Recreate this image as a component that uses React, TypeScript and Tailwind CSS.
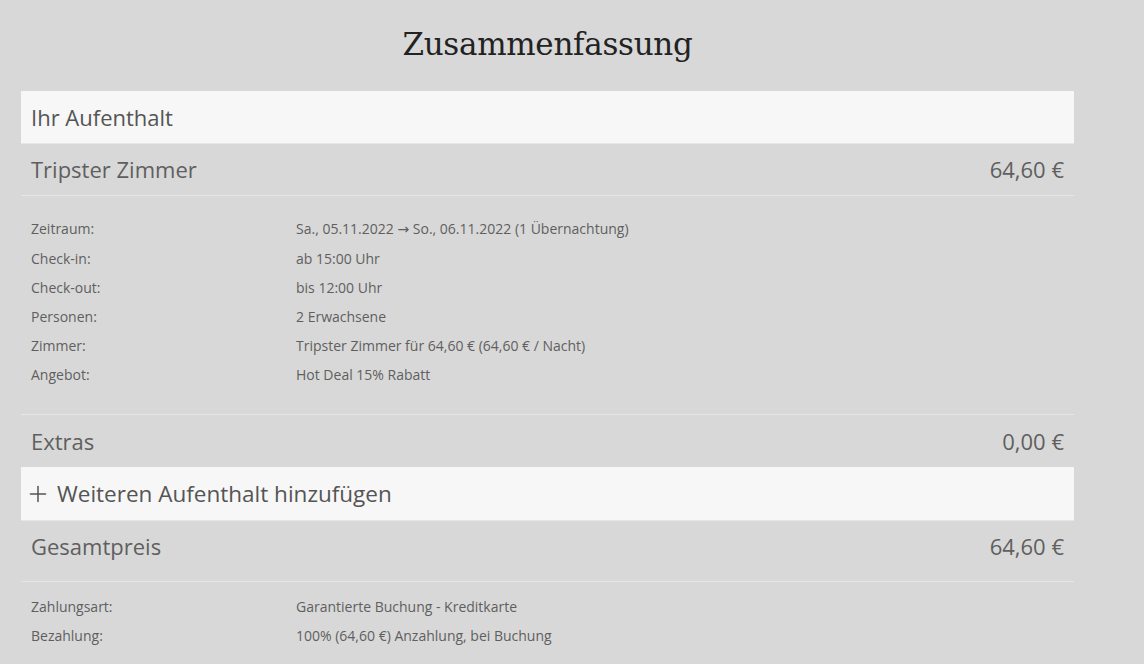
import { Plus } from "lucide-react";

const stay: [string, React.ReactNode][] = [
  [
    "Zeitraum:",
    <>
      Sa., 05.11.2022 <span className="font-['DejaVu_Sans',sans-serif] text-[14px]">{"\u2192"}</span> So., 06.11.2022 (1 Übernachtung)
    </>,
  ],
  ["Check-in:", "ab 15:00 Uhr"],
  ["Check-out:", "bis 12:00 Uhr"],
  ["Personen:", "2 Erwachsene"],
  ["Zimmer:", "Tripster Zimmer für 64,60 € (64,60 € / Nacht)"],
  ["Angebot:", "Hot Deal 15% Rabatt"],
];

const payment: [string, React.ReactNode][] = [
  ["Zahlungsart:", "Garantierte Buchung - Kreditkarte"],
  ["Bezahlung:", "100% (64,60 €) Anzahlung, bei Buchung"],
];

function PriceRow({ label, price, className = "" }: { label: string; price: string; className?: string }) {
  return (
    <div className={`flex items-center justify-between px-[10px] border-b border-[#e6e6e6] text-[22px] text-[#5f5f5f] ${className}`}>
      <span>{label}</span>
      <span>{price}</span>
    </div>
  );
}

function Details({ rows, className = "", rowClass = "" }: { rows: [string, React.ReactNode][]; className?: string; rowClass?: string }) {
  return (
    <div className={`px-[10px] text-[14px] text-[#5f5f5f] ${className}`}>
      {rows.map(([k, v]) => (
        <div key={k} className={`flex h-[29px] items-center ${rowClass}`}>
          <span className="w-[265px] shrink-0">{k}</span>
          <span>{v}</span>
        </div>
      ))}
    </div>
  );
}

export default function App() {
  return (
    <div className="bg-[#d8d8d8] font-['Open_Sans',sans-serif] overflow-hidden h-[664px]">
      <div className="w-[1053px] ml-[21px]">
        <h1 className="h-[91px] pt-[22px] text-center text-[31px] leading-[44px] text-[#222] font-['DejaVu_Serif',serif] tracking-[-0.3px]">
          Zusammenfassung
        </h1>

        <div className="h-[53px] bg-[#f7f7f7] border-b border-[#e6e6e6] flex items-center px-[10px] text-[22px] text-[#555]">
          Ihr Aufenthalt
        </div>
        <PriceRow label="Tripster Zimmer" price="64,60 €" className="h-[52px]" />
        <Details rows={stay} rowClass="first:h-[31px]" className="pt-[17px] pb-[25px] border-b border-[#e6e6e6]" />
        <PriceRow label="Extras" price="0,00 €" className="h-[52px] border-b-0" />

        <div className="h-[54px] bg-[#f7f7f7] border-b border-[#e6e6e6] flex items-center gap-[6px] px-[4px] text-[22.5px] text-[#555]">
          <Plus className="w-[26px] h-[26px] text-[#555]" strokeWidth={1.4} />
          Weiteren Aufenthalt hinzufügen
        </div>
        <PriceRow label="Gesamtpreis" price="64,60 €" className="h-[61px] pb-[9px]" />
        <Details rows={payment} className="pt-[10px]" />
      </div>
    </div>
  );
}
